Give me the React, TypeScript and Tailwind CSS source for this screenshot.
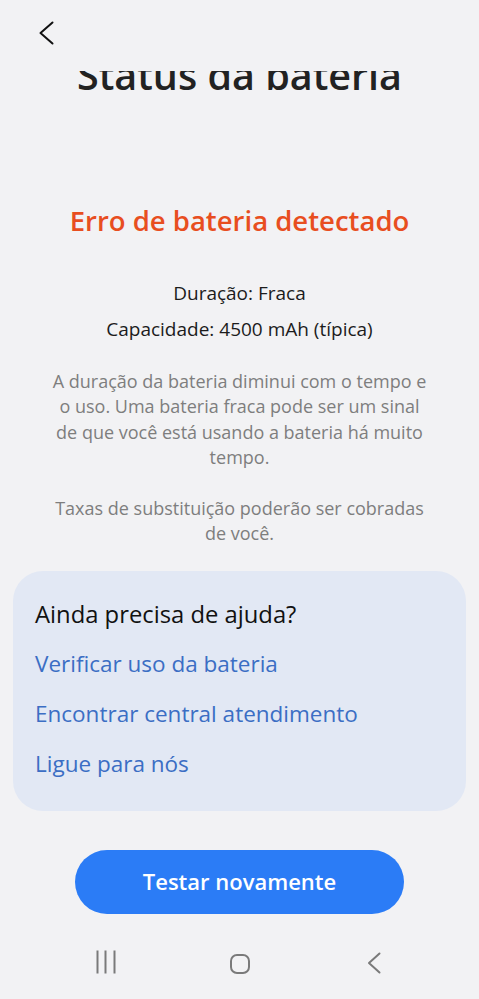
import React from 'react'

const font = { fontFamily: '"Open Sans", "Noto Sans", sans-serif' }

export default function App() {
  return (
    <div className="w-[479px] h-[999px] bg-[#f2f2f4] flex flex-col overflow-hidden" style={font}>
      {/* Barra superior */}
      <div className="h-[71px] shrink-0 pl-[37px] pt-[20px]">
        <button className="w-[18px] h-[26px] flex items-center justify-center" aria-label="Voltar">
          <svg width="16" height="24" viewBox="0 0 16 24" fill="none">
            <path d="M14.5 1.5L2.5 12l12 10.5" stroke="#111" strokeWidth="2" strokeLinecap="round" strokeLinejoin="round" />
          </svg>
        </button>
      </div>

      {/* Título cortado pelo cabeçalho */}
      <div className="h-[26px] shrink-0 overflow-hidden flex items-end justify-center">
        <h1 className="text-[39.5px] leading-[44px] font-semibold text-[#222] whitespace-nowrap">
          Status da bateria
        </h1>
      </div>

      <div className="flex flex-col items-center text-center px-[49px]">
        <h2 className="mt-[107px] text-[27.5px] leading-[34px] font-semibold text-[#e84e1f] whitespace-nowrap">
          Erro de bateria detectado
        </h2>

        <p className="mt-[37px] text-[19px] leading-[36px] text-[#1c1c1c] whitespace-nowrap">Duração: Fraca</p>
        <p className="text-[19px] leading-[36px] text-[#1c1c1c] whitespace-nowrap">Capacidade: 4500 mAh (típica)</p>

        <p className="mt-[22px] text-[18px] leading-[25.4px] text-[#7e7e7e]">
          A duração da bateria diminui com o tempo e o uso. Uma bateria fraca pode ser um sinal de que você está
          usando a bateria há muito tempo.
        </p>
        <p className="mt-[25.4px] text-[18px] leading-[25.4px] text-[#7e7e7e]">
          Taxas de substituição poderão ser cobradas de você.
        </p>
      </div>

      {/* Cartão de ajuda */}
      <div className="mx-[13px] mt-[24px] rounded-[30px] bg-[#e2e8f4] px-[22px] pt-[29px] pb-[33px] flex flex-col gap-[22px]">
        <p className="text-[23.8px] leading-[28px] text-[#111]">Ainda precisa de ajuda?</p>
        <a className="text-[22.5px] leading-[28px] text-[#3b6ec4]">Verificar uso da bateria</a>
        <a className="text-[22.5px] leading-[28px] text-[#3b6ec4]">Encontrar central atendimento</a>
        <a className="text-[22.5px] leading-[28px] text-[#3b6ec4]">Ligue para nós</a>
      </div>

      <div className="flex justify-center mt-[39px]">
        <button className="w-[329px] h-[64px] rounded-full bg-[#2b7cf6] text-white text-[22px] font-semibold">
          Testar novamente
        </button>
      </div>

      {/* Barra de navegação */}
      <div className="mt-auto h-[66px] shrink-0 flex items-start px-[38.5px] pt-[17px]">
        <div className="flex-1 flex justify-center">
          <svg width="24" height="24" viewBox="0 0 24 24" fill="none">
            <path d="M3.5 0.5v23M11.5 0.5v23M20.5 0.5v23" stroke="#7a7a7a" strokeWidth="2" />
          </svg>
        </div>
        <div className="flex-1 flex justify-center">
          <svg width="24" height="24" viewBox="0 0 24 24" fill="none">
            <rect x="3" y="5" width="18" height="18" rx="6" stroke="#7a7a7a" strokeWidth="2" />
          </svg>
        </div>
        <div className="flex-1 flex justify-center">
          <svg width="24" height="24" viewBox="0 0 24 24" fill="none">
            <path d="M17.5 3.5L7 13l10.5 9.5" stroke="#7a7a7a" strokeWidth="2" strokeLinecap="round" strokeLinejoin="round" />
          </svg>
        </div>
      </div>
    </div>
  )
}
